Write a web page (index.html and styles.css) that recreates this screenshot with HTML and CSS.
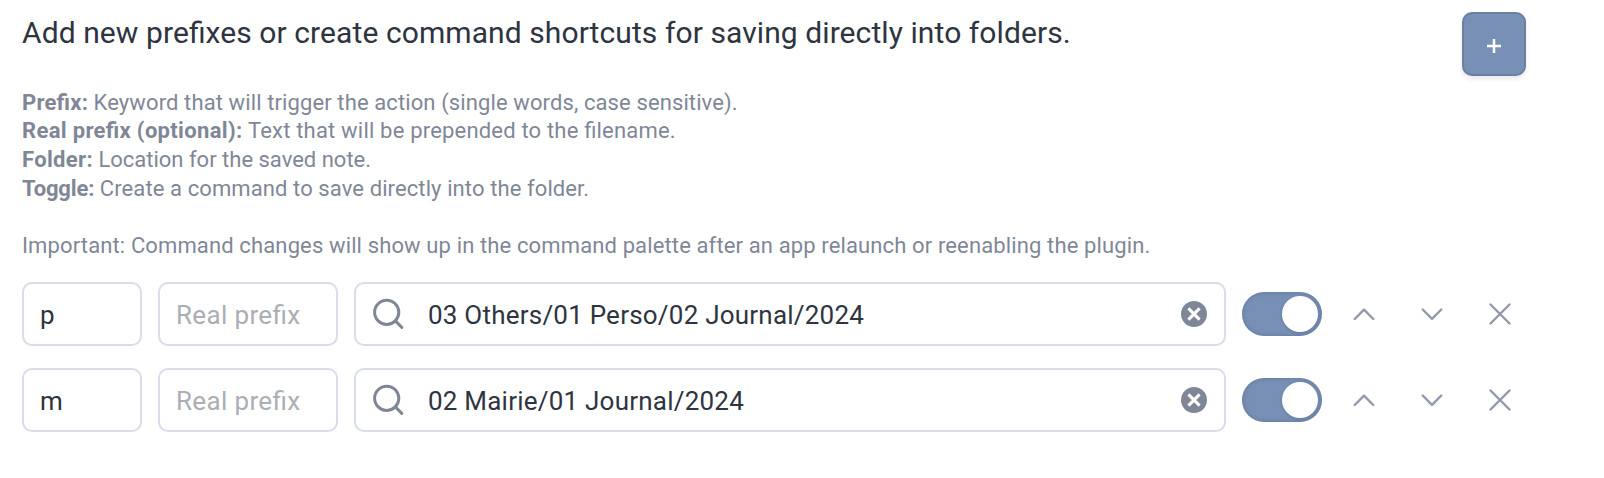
FILE: index.html
```
<!DOCTYPE html>
<html lang="en">
<head>
<meta charset="utf-8">
<title>Prefixes</title>
<link rel="stylesheet" href="styles.css">
</head>
<body>
<main class="settings">
  <header class="intro">
    <h1 class="title">Add new prefixes or create command shortcuts for saving directly into folders.</h1>
    <button class="add" aria-label="Add prefix"><svg width="14" height="14" viewBox="0 0 14 14"><path d="M7 0v14M0 7h14"/></svg></button>
  </header>
  <section class="help">
    <p class="prefix-help"><b>Prefix:</b> <span>Keyword that will trigger the action (single words, case sensitive).</span></p>
    <p class="real-help"><b>Real prefix (optional):</b> <span>Text that will be prepended to the filename.</span></p>
    <p class="folder-help"><b>Folder:</b> <span>Location for the saved note.</span></p>
    <p class="toggle-help"><b>Toggle:</b> <span>Create a command to save directly into the folder.</span></p>
    <p class="note">Important: Command changes will show up in the command palette after an app relaunch or reenabling the plugin.</p>
  </section>
  <section class="rows">
    <div class="row">
      <div class="field key"><span>p</span></div>
      <div class="field real"><span>Real prefix</span></div>
      <div class="field folder">
        <svg class="search" width="34" height="34" viewBox="0 0 34 34"><circle cx="15.7" cy="15.3" r="12.1"/><path d="M24.3 23.9l6.5 6.5"/></svg>
        <span class="path">03 Others/01 Perso/02 Journal/2024</span>
        <svg class="clear" width="26" height="26" viewBox="0 0 26 26"><circle cx="13" cy="13" r="13"/><path d="M7.4 7.4l11.2 11.2M18.6 7.4L7.4 18.6"/></svg>
      </div>
      <div class="toggle"><i class="thumb"></i></div>
      <div class="actions">
        <svg width="24" height="24" viewBox="0 0 24 24"><path d="M2.7 17l9.3-9.3 9.3 9.3"/></svg>
        <svg width="24" height="24" viewBox="0 0 24 24"><path d="M2.7 7.5l9.3 9.3 9.3-9.3"/></svg>
        <svg width="24" height="24" viewBox="0 0 24 24"><path d="M2.5 2.5l19 19M21.5 2.5l-19 19"/></svg>
      </div>
    </div>
    <div class="row">
      <div class="field key"><span>m</span></div>
      <div class="field real"><span>Real prefix</span></div>
      <div class="field folder">
        <svg class="search" width="34" height="34" viewBox="0 0 34 34"><circle cx="15.7" cy="15.3" r="12.1"/><path d="M24.3 23.9l6.5 6.5"/></svg>
        <span class="path">02 Mairie/01 Journal/2024</span>
        <svg class="clear" width="26" height="26" viewBox="0 0 26 26"><circle cx="13" cy="13" r="13"/><path d="M7.4 7.4l11.2 11.2M18.6 7.4L7.4 18.6"/></svg>
      </div>
      <div class="toggle"><i class="thumb"></i></div>
      <div class="actions">
        <svg width="24" height="24" viewBox="0 0 24 24"><path d="M2.7 17l9.3-9.3 9.3 9.3"/></svg>
        <svg width="24" height="24" viewBox="0 0 24 24"><path d="M2.7 7.5l9.3 9.3 9.3-9.3"/></svg>
        <svg width="24" height="24" viewBox="0 0 24 24"><path d="M2.5 2.5l19 19M21.5 2.5l-19 19"/></svg>
      </div>
    </div>
  </section>
</main>
</body>
</html>
```
FILE: styles.css
```
* { box-sizing: border-box; }
body { margin: 0; background: #fff; font-family: Roboto, "Open Sans", sans-serif; color: #2e3440; font-feature-settings: "liga" 1; }
p, h1 { margin: 0; white-space: nowrap; }
.settings { padding: 12px 78px 0 22px; }
.intro { display: flex; justify-content: space-between; height: 74px; }
.title { font-size: 30px; font-weight: 400; line-height: 42px; letter-spacing: .085px; }
.add { width: 64px; height: 64px; padding: 4px 0 0; display: grid; place-items: center; border: 2px solid #6b7fa1; border-radius: 10px; background: #7890b5; box-shadow: 0 3px 5px rgba(0, 0, 0, .09); }
.add svg { stroke: #fff; stroke-width: 2.5; }
.help { height: 196px; padding-top: 2.5px; font-size: 22px; line-height: 28.7px; color: #7f8797; }
.prefix-help b { letter-spacing: .23px; }
.prefix-help span { letter-spacing: .11px; }
.real-help b { letter-spacing: .33px; }
.real-help span { letter-spacing: .19px; }
.folder-help b { letter-spacing: .33px; }
.toggle-help b { letter-spacing: -.13px; }
.toggle-help span { letter-spacing: .1px; }
.note { margin-top: 28.2px; letter-spacing: .13px; }
.rows { display: flex; flex-direction: column; gap: 22px; }
.row { display: flex; align-items: center; gap: 16px; }
.field { height: 64px; padding: 0 17px 0 16px; border: 2px solid #d9dcea; border-radius: 10px; display: flex; align-items: center; font-size: 26px; background: #fff; }
.field span { padding-top: 2px; }
.key { width: 120px; }
.real { width: 180px; color: #abaeb5; letter-spacing: .35px; }
.folder { width: 872px; }
.search { fill: none; stroke: #7f8797; stroke-width: 3; stroke-linecap: round; margin-left: -1px; }
.path { flex: 1; margin-left: 23px; white-space: nowrap; letter-spacing: .22px; }
.clear circle { fill: #7f8797; }
.clear path { stroke: #fff; stroke-width: 3; }
.toggle { width: 80px; height: 44px; padding: 4px; display: flex; justify-content: flex-end; border-radius: 22px; background: #7890b5; box-shadow: inset 0 0 5px rgba(60, 80, 120, .4); }
.thumb { width: 36px; height: 36px; border-radius: 50%; background: #fff; box-shadow: 0 1px 3px rgba(40, 60, 100, .25); }
.actions { display: flex; gap: 44px; margin-left: 14px; }
.actions svg { fill: none; stroke: #9299a9; stroke-width: 2.4; stroke-linecap: round; stroke-linejoin: round; }
```
